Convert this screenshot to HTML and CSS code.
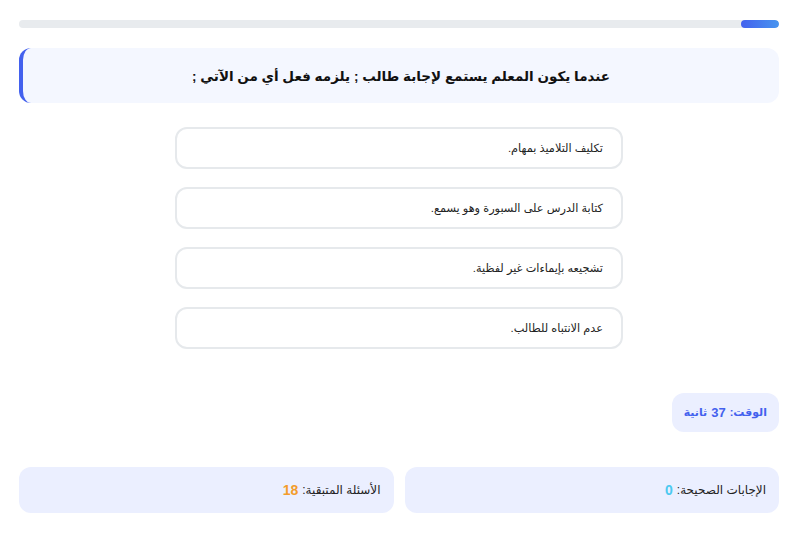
FILE: index.html
```html
<!DOCTYPE html>
<html lang="ar" dir="rtl">

<head>
    <meta charset="utf-8">
    <title>اختبار</title>
    <link rel="stylesheet" href="styles.css">
</head>

<body>
    <div class="quiz">
        <div class="progress">
            <div class="progressFill"></div>
        </div>

        <div class="question">عندما يكون المعلم يستمع لإجابة طالب ; يلزمه فعل أي من الآتي ;</div>

        <div class="options">
            <div class="option">تكليف التلاميذ بمهام.</div>
            <div class="option">كتابة الدرس على السبورة وهو يسمع.</div>
            <div class="option">تشجيعه بإيماءات غير لفظية.</div>
            <div class="option">عدم الانتباه للطالب.</div>
        </div>

        <div class="timerRow">
            <div class="timer">الوقت: <span>37</span> ثانية</div>
        </div>

        <div class="stats">
            <div class="stat">الإجابات الصحيحة: <span class="correct">0</span></div>
            <div class="stat">الأسئلة المتبقية: <span class="left">18</span></div>
        </div>
    </div>
</body>

</html>
```

FILE: styles.css
```css
body {
    margin: 0;
    background: #ffffff;
    font-family: 'Liberation Sans', Arial, 'DejaVu Sans', sans-serif;
    color: #222222;
}

.quiz {
    padding: 20px 16px 0 19px;
}

.progress {
    height: 8px;
    border-radius: 4px;
    background: #e8ebee;
    overflow: hidden;
}

.progressFill {
    width: 38px;
    height: 100%;
    border-radius: 4px;
    background: linear-gradient(to right, #4361ee, #4895ef);
}

.question {
    margin-top: 20px;
    height: 55px;
    display: flex;
    align-items: center;
    justify-content: center;
    background: #f4f7ff;
    border-left: 4px solid #4361ee;
    border-radius: 12px;
    font-size: 13.5px;
    font-weight: bold;
    color: #111111;
}

.options {
    margin: 24px auto 0;
    width: 448px;
    display: flex;
    flex-direction: column;
    gap: 18px;
}

.option {
    height: 38px;
    display: flex;
    align-items: center;
    padding: 0 18px;
    border: 2px solid #e6e9ec;
    border-radius: 12px;
    font-size: 11.3px;
    color: #222222;
}

.timerRow {
    margin-top: 44px;
    display: flex;
}

.timer {
    height: 39px;
    display: flex;
    align-items: center;
    padding: 0 12px;
    background: #ebefff;
    border-radius: 12px;
    font-size: 11px;
    font-weight: bold;
    color: #4361ee;
}

.timer span {
    margin: 0 4px;
    font-size: 13px;
}

.stats {
    margin-top: 35px;
    display: flex;
    gap: 11px;
}

.stat {
    flex: 1;
    height: 46px;
    display: flex;
    align-items: center;
    padding: 0 13px;
    background: #ebefff;
    border-radius: 12px;
    font-size: 12px;
    color: #222222;
}

.stat span {
    margin-right: 4px;
    font-size: 14px;
    font-weight: bold;
}

.correct {
    color: #4cc9f0;
}

.left {
    color: #f39c2c;
}
```
